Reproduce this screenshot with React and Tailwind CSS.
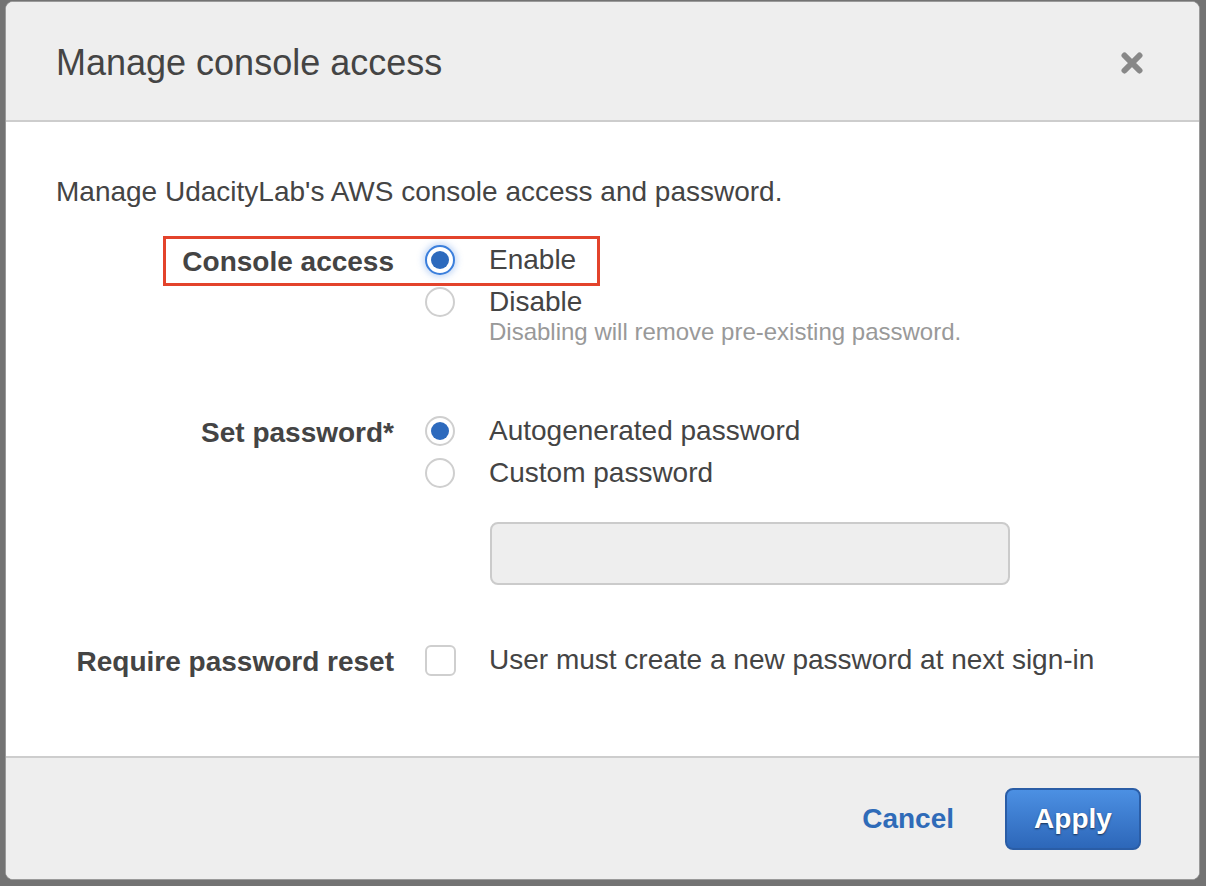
import React from "react";

const font = { fontFamily: '"Liberation Sans", Arial, Helvetica, sans-serif' };

function Radio({ checked, focused }) {
    return (
        <span
            className={
                "flex h-[30px] w-[30px] shrink-0 items-center justify-center rounded-full border-2 bg-white " +
                (focused
                    ? "border-[#3b7fdc] shadow-[0_0_6px_2px_rgba(80,140,230,0.35)]"
                    : "border-[#cfcfcf]")
            }
        >
            {checked && <span className="h-[18px] w-[18px] rounded-full bg-[#2d6abd]" />}
        </span>
    );
}

function CloseIcon() {
    return (
        <svg width="22" height="22" viewBox="0 0 22 22">
            <path d="M3.5 3.5 L18.5 18.5 M18.5 3.5 L3.5 18.5" stroke="#888" strokeWidth="6" strokeLinecap="round" />
        </svg>
    );
}

export default function App() {
    return (
        <div className="h-[886px] w-[1206px] overflow-hidden bg-[#737373] pl-[5px] pt-[1px]" style={font}>
            <div className="flex h-[879px] w-[1195px] flex-col overflow-hidden rounded-[8px] border border-[#9a9a9a] bg-white text-[#444]">
                {/* header */}
                <div className="flex h-[120px] shrink-0 items-center justify-between border-b-2 border-[#cdcdcd] bg-[#eeeeee] pl-[50px] pr-[56px] pt-[3px]">
                    <h1 className="text-[36px] leading-none font-normal">Manage console access</h1>
                    <CloseIcon />
                </div>

                {/* body */}
                <div className="relative h-[634px] shrink-0 px-[50px] pt-[50px] text-[28px]">
                    <p className="leading-[40px]">Manage UdacityLab's AWS console access and password.</p>

                    <div className="mt-[27px] flex">
                        <div className="flex h-[42px] w-[338px] items-center justify-end pt-[3px] font-bold">Console access</div>
                        <div className="ml-[31px] flex flex-col">
                            <div className="flex h-[42px] items-center">
                                <Radio checked focused />
                                <span className="ml-[34px]">Enable</span>
                            </div>
                            <div className="mt-[3px] flex items-start">
                                <div className="flex h-[36px] items-center">
                                    <Radio />
                                </div>
                                <div className="ml-[34px] flex flex-col">
                                    <span className="leading-[36px]">Disable</span>
                                    <span className="text-[24px] leading-[24px] text-[#999]">
                                        Disabling will remove pre-existing password.
                                    </span>
                                </div>
                            </div>
                        </div>
                    </div>

                    <div className="mt-[66px] flex">
                        <div className="flex h-[42px] w-[338px] items-center justify-end pt-[3px] font-bold">Set password*</div>
                        <div className="ml-[31px] flex flex-col">
                            <div className="flex h-[42px] items-center">
                                <Radio checked />
                                <span className="ml-[34px]">Autogenerated password</span>
                            </div>
                            <div className="flex h-[42px] items-center">
                                <Radio />
                                <span className="ml-[34px]">Custom password</span>
                            </div>
                            <div className="ml-[65px] mt-[28px] h-[63px] w-[520px] rounded-[8px] border-2 border-[#cbcbcb] bg-[#eeeeee]" />
                        </div>
                    </div>

                    <div className="mt-[54px] flex">
                        <div className="flex h-[42px] w-[338px] items-center justify-end pt-[3px] font-bold">Require password reset</div>
                        <div className="ml-[31px] flex h-[42px] items-center">
                            <span className="h-[31px] w-[31px] shrink-0 rounded-[6px] border-2 border-[#cfcfcf] bg-white" />
                            <span className="ml-[33px]">User must create a new password at next sign-in</span>
                        </div>
                    </div>

                    {/* highlight annotation */}
                    <div className="absolute left-[157px] top-[114px] h-[50px] w-[437px] border-[3px] border-[#e3432b]" />
                </div>

                {/* footer */}
                <div className="flex flex-1 items-center justify-end border-t-2 border-[#cdcdcd] bg-[#eeeeee] pr-[58px]">
                    <button type="button" className="mr-[51px] text-[28px] font-bold text-[#2f6bb8]">
                        Cancel
                    </button>
                    <button
                        type="button"
                        className="h-[62px] w-[136px] rounded-[8px] border-2 border-[#2a5da6] bg-gradient-to-b from-[#4c90e3] to-[#2d67b9] text-[28px] font-bold text-white [text-shadow:0_1px_2px_rgba(0,0,0,0.6)]"
                    >
                        Apply
                    </button>
                </div>
            </div>
        </div>
    );
}
